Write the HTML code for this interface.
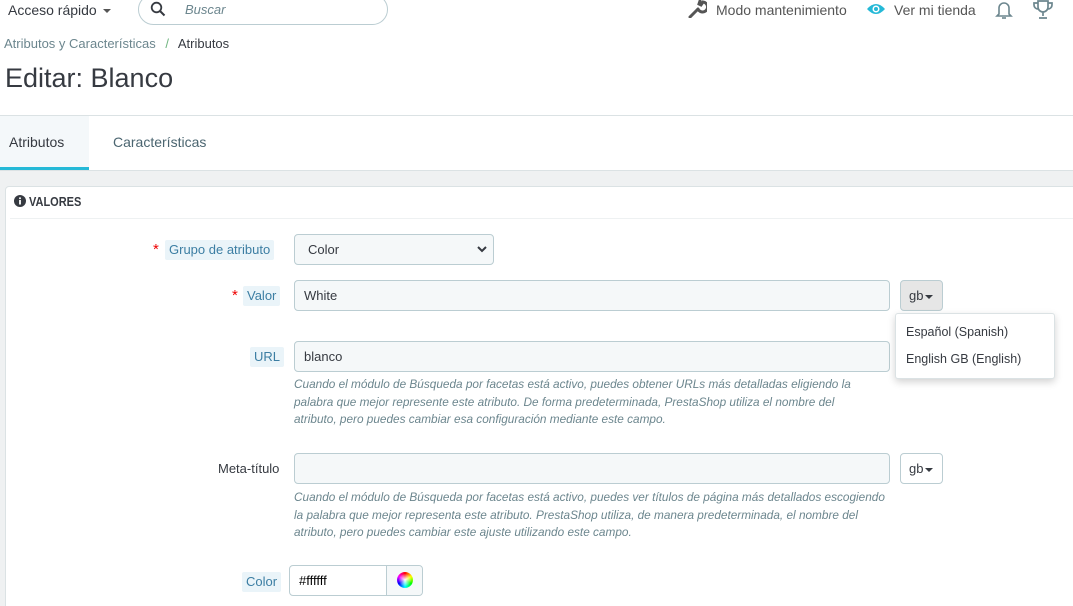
<!DOCTYPE html>
<html><head><meta charset="utf-8"><style>
*{box-sizing:border-box;margin:0;padding:0}
html,body{width:1073px;height:606px;overflow:hidden}
body{background:#fff;font-family:"Liberation Sans",sans-serif;color:#363a41;font-size:13px;position:relative}
.a{position:absolute}
.lbl{position:absolute;background:#eaf4f9;color:#3c7ea3;font-size:13px;padding:2px 4px;height:20px;line-height:16px;border-radius:2px}
.star{position:absolute;color:#e00;font-size:15px}
.inp{position:absolute;background:#f5f8f9;border:1px solid #bbcdd2;border-radius:4px;height:31px;line-height:29px;padding-left:9px;font-size:13px;color:#363a41}
.help{position:absolute;left:294px;width:620px;white-space:nowrap;color:#6c868e;font-style:italic;font-size:11.8px;line-height:17.5px}
.gb{position:absolute;width:43px;height:31px;border:1px solid #bbcdd2;border-radius:4px;font-size:13px;line-height:29px;padding-left:8px;color:#363a41}
.car{display:inline-block;border-left:4px solid transparent;border-right:4px solid transparent;border-top:4px solid #363a41;vertical-align:middle;margin-left:2px}
</style></head><body>
<div class="a" style="left:8px;top:2px;font-size:14px">Acceso rápido <span class="car" style="border-top-color:#555"></span></div>
<div class="a" style="left:138px;top:-6px;width:250px;height:31px;border:1px solid #bbcdd2;border-radius:16px"></div>
<svg class="a" style="left:150px;top:1px" width="16" height="16" viewBox="0 0 16 16"><circle cx="6.5" cy="6.5" r="4.8" fill="none" stroke="#363a41" stroke-width="1.8"/><path d="M10 10l4.5 4.5" stroke="#363a41" stroke-width="2"/></svg>
<div class="a" style="left:185px;top:2px;font-style:italic;color:#6c868e;font-size:13px">Buscar</div>
<svg class="a" style="left:687px;top:0" width="20" height="18" viewBox="0 0 20 18"><path d="M3 17l8-8M11 9a5 5 0 1 0 5-7l-2 3-2-1 1-3" stroke="#555" stroke-width="3" fill="none" stroke-linecap="round"/></svg>
<div class="a" style="left:716px;top:2px;font-size:14px;color:#555">Modo mantenimiento</div>
<svg class="a" style="left:866px;top:2px" width="20" height="14" viewBox="0 0 20 14"><path d="M1 7Q10-3 19 7Q10 17 1 7Z" fill="#25b9d7"/><circle cx="10" cy="7" r="3.5" fill="#fff"/><circle cx="10" cy="7" r="2" fill="#25b9d7"/></svg>
<div class="a" style="left:894px;top:2px;font-size:14px;color:#555">Ver mi tienda</div>
<svg class="a" style="left:995px;top:0" width="18" height="20" viewBox="0 0 18 20"><path d="M4 14V8a5 5 0 0 1 10 0v6l2 2H2z" fill="none" stroke="#6c868e" stroke-width="1.6"/><path d="M7 18h4" stroke="#6c868e" stroke-width="1.6"/></svg>
<svg class="a" style="left:1033px;top:0" width="20" height="20" viewBox="0 0 20 20"><path d="M5 1h10v6a5 5 0 0 1-10 0zM5 3H1v2a4 4 0 0 0 4 4M15 3h4v2a4 4 0 0 1-4 4M10 12v4M6 18h8" fill="none" stroke="#6c868e" stroke-width="1.7"/></svg>
<div class="a" style="left:4px;top:36px;font-size:13px;color:#6c868e">Atributos y Características <span style="color:#70b580;margin:0 6px">/</span> <span style="color:#363a41">Atributos</span></div>
<div class="a" style="left:5px;top:63px;font-size:27px;color:#363a41">Editar: Blanco</div>
<div class="a" style="left:0;top:115px;width:1073px;height:1px;background:#dbe2e4"></div>
<div class="a" style="left:0;top:116px;width:89px;height:54px;background:#f4f8fa;border-bottom:3px solid #25b9d7"></div>
<div class="a" style="left:9px;top:134px;font-size:14px">Atributos</div>
<div class="a" style="left:113px;top:134px;font-size:14px;color:#4b6570">Características</div>
<div class="a" style="left:0;top:170px;width:1073px;height:436px;background:#eff1f2;border-top:1px solid #dbe2e4"></div>
<div class="a" style="left:5px;top:186px;width:1080px;height:430px;background:#fff;border:1px solid #dbe2e4;border-radius:4px"></div>
<div class="a" style="left:10px;top:218px;width:1070px;height:1px;background:#eef1f2"></div>
<svg class="a" style="left:14px;top:195px" width="12" height="12" viewBox="0 0 12 12"><circle cx="6" cy="6" r="6" fill="#363a41"/><rect x="5.1" y="5" width="1.8" height="4.5" fill="#fff"/><circle cx="6" cy="3.2" r="1" fill="#fff"/></svg>
<div class="a" style="left:29px;top:195px;font-size:12.5px;font-weight:bold;color:#363a41;transform:scaleX(.88);transform-origin:left">VALORES</div>

<span class="star" style="left:153px;top:241px">*</span>
<div class="lbl" style="left:165px;top:240px">Grupo de atributo</div>
<div class="inp" style="left:294px;top:234px;width:200px;padding-left:13px">Color<svg style="position:absolute;right:6px;top:11px" width="10" height="7" viewBox="0 0 10 7"><path d="M1 1l4 4 4-4" stroke="#363a41" stroke-width="2" fill="none"/></svg></div>

<span class="star" style="left:232px;top:287px">*</span>
<div class="lbl" style="left:243px;top:286px">Valor</div>
<div class="inp" style="left:294px;top:280px;width:596px">White</div>
<div class="gb" style="left:900px;top:280px;background:#e6e6e6">gb<span class="car"></span></div>

<div class="lbl" style="left:250px;top:347px">URL</div>
<div class="inp" style="left:294px;top:341px;width:596px">blanco</div>
<div class="help" style="top:376px">Cuando el módulo de Búsqueda por facetas está activo, puedes obtener URLs más detalladas eligiendo la<br>palabra que mejor represente este atributo. De forma predeterminada, PrestaShop utiliza el nombre del<br>atributo, pero puedes cambiar esa configuración mediante este campo.</div>

<div class="a" style="left:218px;top:461px;font-size:13px">Meta-título</div>
<div class="inp" style="left:294px;top:453px;width:596px"></div>
<div class="gb" style="left:900px;top:453px;background:#fff">gb<span class="car"></span></div>
<div class="help" style="top:489px">Cuando el módulo de Búsqueda por facetas está activo, puedes ver títulos de página más detallados escogiendo<br>la palabra que mejor representa este atributo. PrestaShop utiliza, de manera predeterminada, el nombre del<br>atributo, pero puedes cambiar este ajuste utilizando este campo.</div>

<div class="lbl" style="left:242px;top:572px">Color</div>
<div class="a" style="left:289px;top:565px;width:134px;height:31px;border:1px solid #bbcdd2;border-radius:4px;background:#fff"></div>
<div class="a" style="left:386px;top:566px;width:36px;height:29px;background:#f5f8f9;border-left:1px solid #bbcdd2;border-radius:0 4px 4px 0"></div>
<div class="a" style="left:397px;top:572px;width:16px;height:16px;border-radius:50%;background:conic-gradient(red,yellow,lime,cyan,blue,magenta,red)"></div>
<div class="a" style="left:399px;top:574px;width:12px;height:12px;border-radius:50%;background:radial-gradient(#fff,rgba(255,255,255,0) 80%)"></div>
<div class="a" style="left:299px;top:573px;font-size:13px;color:#000">#ffffff</div>

<div class="a" style="left:895px;top:313px;width:160px;height:66px;background:#fff;border:1px solid #dbe2e4;border-radius:3px;box-shadow:0 3px 8px rgba(0,0,0,.18)"></div>
<div class="a" style="left:906px;top:325px;font-size:12.5px">Español (Spanish)</div>
<div class="a" style="left:906px;top:352px;font-size:12.5px">English GB (English)</div>
</body></html>
